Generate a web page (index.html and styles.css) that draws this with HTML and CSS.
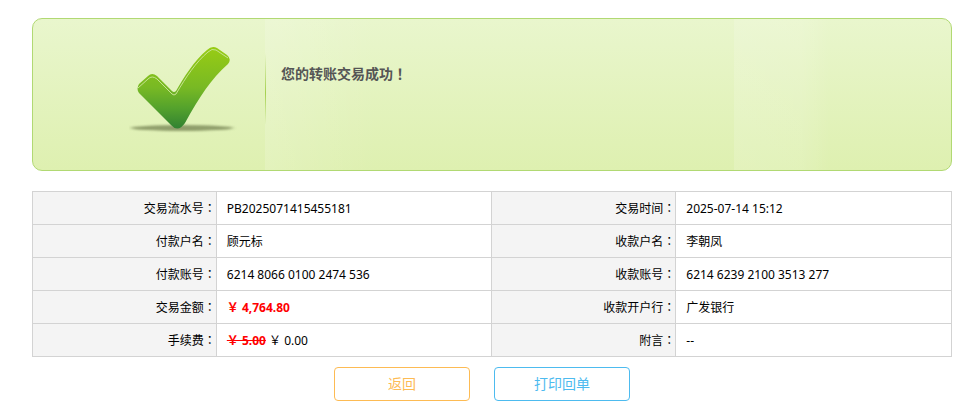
FILE: index.html
```html
<!DOCTYPE html>
<html lang="zh-CN">
<head>
	<meta charset="UTF-8">
	<title>转账结果</title>
	<link rel="stylesheet" href="styles.css">
</head>
<body>
	<div class="main">
		<div class="result">
			<div class="pic">
				<svg width="108" height="90" viewBox="0 0 108 90">
					<defs>
						<linearGradient id="green" x1="0" y1="0" x2="0" y2="1">
							<stop offset="0" stop-color="#98cc14"/>
							<stop offset="0.5" stop-color="#78b924"/>
							<stop offset="0.75" stop-color="#54a22c"/>
							<stop offset="1" stop-color="#318132"/>
						</linearGradient>
						<filter id="soft" x="-10%" y="-100%" width="120%" height="300%">
							<feGaussianBlur stdDeviation="2 1"/>
						</filter>
					</defs>
					<ellipse cx="53" cy="82" rx="51" ry="3" fill="#7b8a58" opacity="0.8" filter="url(#soft)"/>
					<path fill="url(#green)" d="M10 38L19 30Q23 26 28 30L43 45Q45 47 47 45C55 31 65 15 78 4Q83 -1 88 2L98 9Q103 13 99 18C82 33 71 50 56 77Q49 87 42 79L10 47Q7 43 10 38Z"/>
					<path fill="none" stroke="#c7e391" stroke-width="1" d="M9 42L19 33Q23 29 28 33L43 48Q45 50 47 48C57 31 67 16 79 6Q83 2 87 4L99 12"/>
				</svg>
			</div>
			<div class="tip">
				<p>您的转账交易成功<span class="mark" lang="zh-TW">！</span></p>
			</div>
		</div>

		<table class="list">
			<tr>
				<th scope="row">交易流水号<span class="mark" lang="zh-TW">：</span></th>
				<td>PB2025071415455181</td>
				<th scope="row">交易时间<span class="mark" lang="zh-TW">：</span></th>
				<td>2025-07-14 15:12</td>
			</tr>
			<tr>
				<th scope="row">付款户名<span class="mark" lang="zh-TW">：</span></th>
				<td>顾元标</td>
				<th scope="row">收款户名<span class="mark" lang="zh-TW">：</span></th>
				<td>李朝凤</td>
			</tr>
			<tr>
				<th scope="row">付款账号<span class="mark" lang="zh-TW">：</span></th>
				<td>6214 8066 0100 2474 536</td>
				<th scope="row">收款账号<span class="mark" lang="zh-TW">：</span></th>
				<td>6214 6239 2100 3513 277</td>
			</tr>
			<tr>
				<th scope="row">交易金额<span class="mark" lang="zh-TW">：</span></th>
				<td><b class="money">￥ 4,764.80</b></td>
				<th scope="row">收款开户行<span class="mark" lang="zh-TW">：</span></th>
				<td>广发银行</td>
			</tr>
			<tr>
				<th scope="row">手续费<span class="mark" lang="zh-TW">：</span></th>
				<td><del class="money">￥ 5.00</del> ￥ 0.00</td>
				<th scope="row">附言<span class="mark" lang="zh-TW">：</span></th>
				<td>--</td>
			</tr>
		</table>

		<div class="but_wrap">
			<button type="button" class="back">返回</button>
			<button type="button" class="print">打印回单</button>
		</div>
	</div>
</body>
</html>
```
FILE: styles.css
```css
*{margin:0;padding:0;box-sizing:border-box;}
body{background:#fff;color:#000;font:12px/20px "Noto Sans","Noto Sans CJK SC",sans-serif;}
.main{padding:18px 26px 0 32px;}
.mark{font-family:"Noto Sans CJK TC",sans-serif;line-height:1;}

.result{display:flex;align-items:flex-start;min-height:153px;padding:27px 0;border:1px solid #b1d973;border-radius:10px;
	background:
		linear-gradient(to right,rgba(255,255,255,0.15),rgba(255,255,255,0)) 232px 0/112px 100% no-repeat,
		linear-gradient(to right,rgba(255,255,255,0.15),rgba(255,255,255,0.12) 70%,rgba(255,255,255,0)) 701px 0/96px 100% no-repeat,
		linear-gradient(#e9f6cd,#def0b0);}
.pic{width:232px;padding-left:96px;}
.pic svg{display:block;}
.tip{padding:18px 0 40px 15px;border-left:1px solid;border-image:linear-gradient(rgba(160,205,80,0) 10%,#a5d04f 60%,rgba(160,205,80,0)) 1;}
.tip p{color:#555;font-size:14px;font-weight:bold;}

.list{width:100%;margin-top:20px;table-layout:fixed;border-collapse:collapse;}
.list th,.list td{height:33px;padding-top:2px;border:1px solid #d3d3d3;}
.list th{width:20%;background:#f4f4f4;font-weight:normal;text-align:right;}
.list td{width:30%;padding-left:10px;text-align:left;}
.money{color:#f00;font-weight:bold;}

.but_wrap{display:flex;justify-content:center;gap:4px;padding-top:10px;}
.but_wrap button{width:136px;height:34px;margin-right:20px;border:1px solid;border-radius:4px;background:#fff;font:14px/20px "Noto Sans","Noto Sans CJK SC",sans-serif;cursor:pointer;}
.but_wrap .back{border-color:#fdbb54;color:#fdbb54;}
.but_wrap .print{border-color:#4dbbef;color:#4dbbef;}
```
